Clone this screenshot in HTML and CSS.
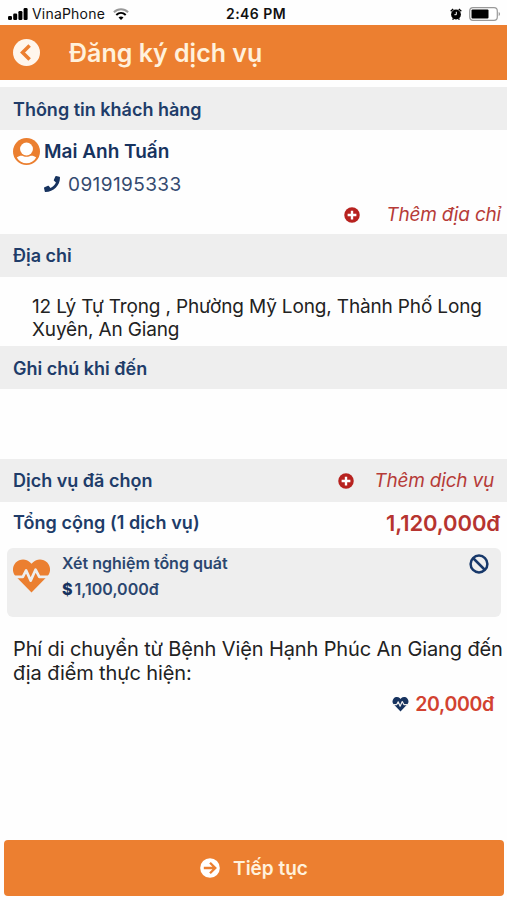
FILE: index.html
```html
<!DOCTYPE html>
<html lang="vi">

<head>
    <meta charset="utf-8">
    <meta name="viewport" content="width=device-width,initial-scale=1.0">
    <title>Đăng ký dịch vụ</title>
    <link rel="stylesheet" href="styles.css">
</head>

<body>
<svg class="symbols" aria-hidden="true">
    <symbol id="plus" viewBox="0 0 512 512">
        <circle cx="256" cy="256" r="248" fill="currentColor"/>
        <path d="M256 116v280M116 256h280" stroke="#fff" stroke-width="76"/>
    </symbol>
    <symbol id="heart" viewBox="0 0 512 512">
        <path d="M256 492 36 267C-14 215-12 130 38 77c55-57 145-59 200-2l18 19 18-19c55-57 145-55 200 2 50 53 52 138 2 190z" fill="currentColor"/>
        <path class="heart-pulse" d="M0 274h136l46-88 62 140 68-150 52 98h148" fill="none" stroke-linejoin="round"/>
    </symbol>
</svg>
<div class="app">
    <div class="status-bar">
        <div class="status-left">
            <svg class="icon-signal" viewBox="0 0 20 12">
                <rect x="0" y="8" width="4" height="4" rx="1.2"/>
                <rect x="5.2" y="5.5" width="4" height="6.5" rx="1.2"/>
                <rect x="10.4" y="3" width="4" height="9" rx="1.2"/>
                <rect x="15.6" y="0" width="4" height="12" rx="1.2"/>
            </svg>
            <span class="carrier">VinaPhone</span>
            <svg class="icon-wifi" viewBox="0 0 16 12" fill="none" stroke="#000" stroke-width="2">
                <path d="M.9 4.2C5 .2 11 .2 15.1 4.2" stroke="#999"/>
                <path d="M3.3 6.9c2.8-2.6 6.6-2.6 9.4 0"/>
                <path d="M8 12 5.5 9.4c1.500-1.300 3.500-1.300 5 0z" fill="#000" stroke="none"/>
            </svg>
        </div>
        <span class="clock">2:46 PM</span>
        <div class="status-right">
            <svg class="icon-alarm" viewBox="0 0 12 12">
                <path d="M.7 3.2 3.2.9M11.3 3.2 8.8.9M2.6 11.7l1-1.4M9.4 11.7l-1-1.4" stroke="#000" stroke-width="1.4"/>
                <circle cx="6" cy="6.5" r="4.9"/>
                <path d="M6.3 3.8v2.9H4.4" fill="none" stroke="#fff"/>
            </svg>
            <svg class="icon-battery" viewBox="0 0 32 14">
                <rect x=".7" y=".7" width="27.6" height="12.6" rx="3.3" fill="#fff" stroke="#999" stroke-width="1.2"/>
                <rect x="2.5" y="2.5" width="17" height="9" rx="1"/>
                <path d="M29.7 5c1.8.6 1.8 3.4 0 4z" fill="#999"/>
            </svg>
        </div>
    </div>

    <header class="header">
        <svg class="icon-back" viewBox="0 0 26 26">
            <circle cx="13" cy="13" r="13" fill="#fff6ec"/>
            <path d="m16 6.300-6.800 6.700 6.800 6.700" fill="none" stroke="#ec7f30" stroke-width="3.4"/>
        </svg>
        <h1 class="header-title">Đăng ký dịch vụ</h1>
    </header>

    <h2 class="section-title section-title-low">Thông tin khách hàng</h2>
    <div class="customer">
        <div class="customer-name">
            <svg class="icon-user" viewBox="0 0 26 26">
                <circle cx="13" cy="13" r="13" fill="#eb7f30"/>
                <circle cx="13" cy="10.6" r="6.2" fill="#fff"/>
                <path d="M3.7 18.7c2.2-1.7 4.5-1.9 6.3-1.2 2 .8 4 .8 6 0 1.8-.7 4.1-.5 6.3 1.2-3.8 7.4-14.8 7.4-18.6 0z" fill="#fff"/>
            </svg>
            <span>Mai Anh Tuấn</span>
        </div>
        <div class="customer-phone">
            <svg class="icon-phone" viewBox="0 0 512 512">
                <path d="M493 25 389 1c-11-3-23 3-27 14l-48 112c-4 10-1 21 7 28l61 50c-36 77-99 140-177 177l-50-61c-7-8-18-11-28-7L15 362C4 366-2 378 1 389l24 104c2 11 12 19 24 19 256 0 463-207 463-463 0-11-8-21-19-24z" fill="currentColor"/>
            </svg>
            <span>0919195333</span>
        </div>
        <div class="add-address">
            <svg class="icon-plus"><use href="#plus"/></svg>
            <span>Thêm địa chỉ</span>
        </div>
    </div>

    <h2 class="section-title">Địa chỉ</h2>
    <p class="address">12 Lý Tự Trọng , Phường Mỹ Long, Thành Phố Long<br>Xuyên, An Giang</p>

    <h2 class="section-title section-title-low">Ghi chú khi đến</h2>
    <div class="note"></div>

    <div class="section-title">
        <span>Dịch vụ đã chọn</span>
        <div class="add-service">
            <svg class="icon-plus"><use href="#plus"/></svg>
            <span>Thêm dịch vụ</span>
        </div>
    </div>
    <div class="total">
        <span>Tổng cộng (1 dịch vụ)</span>
        <span class="total-price">1,120,000đ</span>
    </div>

    <div class="service-card">
        <svg class="icon-heart"><use href="#heart"/></svg>
        <div class="service-info">
            <span class="service-name">Xét nghiệm tổng quát</span>
            <div class="service-price">
                <span class="dollar">$</span>
                <span>1,100,000đ</span>
            </div>
        </div>
        <svg class="icon-ban" viewBox="0 0 20 20" fill="none" stroke="#17386a" stroke-width="2.5">
            <circle cx="10" cy="10" r="8.4"/>
            <path d="m4 4 12 12"/>
        </svg>
    </div>

    <p class="fee-text">Phí di chuyển từ Bệnh Viện Hạnh Phúc An Giang đến<br>địa điểm thực hiện:</p>
    <div class="fee">
        <svg class="icon-heart-small"><use href="#heart"/></svg>
        <span>20,000đ</span>
    </div>

    <button class="btn-continue" type="button">
        <svg class="icon-next" viewBox="0 0 20 20">
            <circle cx="10" cy="10" r="9.8" fill="#fff"/>
            <path d="M3.8 10h11M10 4.7l5.3 5.3-5.3 5.3" fill="none" stroke="#ec7f30" stroke-width="2.3"/>
        </svg>
        <span>Tiếp tục</span>
    </button>
</div>
</body>
</html>
```

FILE: styles.css
```css
* {
    margin: 0;
    padding: 0;
    box-sizing: border-box;
}

body {
    background-color: #fefefe;
    color: #222;
    font-family: Inter, Roboto, "Liberation Sans", sans-serif;
    white-space: nowrap;
}

svg {
    display: block;
    flex: none;
}

.symbols {
    position: absolute;
    width: 0;
    height: 0;
}

.app {
    display: flex;
    flex-direction: column;
    width: 507px;
    height: 900px;
    overflow: hidden;
}

/* status bar */
.status-bar {
    display: grid;
    grid-template-columns: 1fr auto 1fr;
    align-items: center;
    height: 25px;
    padding: 2px 6px 0 8px;
    color: #111;
    font-size: 14px;
}

.status-left {
    display: flex;
    align-items: center;
}

.icon-signal {
    width: 20px;
    height: 12px;
    margin-right: 4px;
}

.carrier {
    letter-spacing: 0.2px;
}

.icon-wifi {
    width: 16px;
    height: 12px;
    margin-left: 8px;
}

.clock {
    padding-left: 3px;
    font-size: 14px;
    font-weight: 600;
    letter-spacing: 0.45px;
}

.status-right {
    display: flex;
    align-items: center;
    justify-content: flex-end;
    gap: 7px;
}

.icon-alarm {
    width: 12px;
    height: 12px;
}

.icon-battery {
    width: 32px;
    height: 14px;
}

/* header */
.header {
    display: flex;
    align-items: center;
    height: 55px;
    margin-bottom: 7px;
    padding: 0 13px;
    background-color: #ec7f30;
}

.icon-back {
    width: 27px;
    height: 27px;
    margin-right: 29px;
}

.header-title {
    color: #fff1dc;
    font-size: 25px;
    font-weight: 600;
}

/* sections */
.section-title {
    display: flex;
    align-items: center;
    justify-content: space-between;
    height: 43px;
    padding: 0 13px;
    background-color: #eee;
    color: #203c69;
    font-size: 18px;
    font-weight: 600;
}

.section-title-low {
    padding-top: 1px;
}

.customer {
    height: 104px;
    padding-top: 6px;
    color: #17335f;
}

.customer-name {
    display: flex;
    align-items: center;
    height: 31px;
    padding-left: 13px;
    font-size: 19px;
    font-weight: 600;
}

.icon-user {
    width: 27px;
    height: 27px;
    margin-right: 4px;
}

.customer-phone {
    display: flex;
    align-items: center;
    height: 34px;
    padding-left: 44px;
    color: #344a70;
    font-size: 19px;
    letter-spacing: 0.4px;
}

.icon-phone {
    width: 16px;
    height: 16px;
    margin-right: 8px;
    color: #17335f;
}

.add-address,
.add-service {
    display: flex;
    align-items: center;
    color: #b63b38;
    font-size: 19px;
    font-style: italic;
    font-weight: 400;
    letter-spacing: -0.2px;
}

.add-address {
    justify-content: flex-end;
    height: 27px;
    padding-right: 6px;
}

.icon-plus {
    width: 16px;
    height: 16px;
    color: #b7221f;
}

.add-address .icon-plus {
    margin-right: 26px;
}

.add-service .icon-plus {
    margin-right: 20px;
}

.address {
    height: 69px;
    padding: 18px 0 0 32px;
    font-size: 19px;
    letter-spacing: -0.15px;
    line-height: 23px;
}

.note {
    height: 70px;
}

/* chosen services */
.total {
    display: flex;
    align-items: center;
    justify-content: space-between;
    height: 41px;
    padding: 0 7px 0 13px;
    color: #203c69;
    font-size: 18px;
    font-weight: 600;
    letter-spacing: 0.05px;
}

.total-price {
    color: #b63430;
    font-size: 22px;
    letter-spacing: -0.1px;
}

.service-card {
    display: flex;
    height: 69px;
    margin: 5px 6px 0 7px;
    padding: 4px 12px 0 6px;
    border-radius: 6px;
    background-color: #eee;
    color: #2b466f;
    font-weight: 600;
}

.icon-heart {
    width: 37px;
    height: 37px;
    margin: 5px 12px 0 0;
    color: #eb7f30;
}

.heart-pulse {
    stroke: #eee;
    stroke-width: 38px;
}

.service-info {
    flex: 1;
    font-size: 16px;
}

.service-name {
    display: block;
    line-height: 22px;
}

.service-price {
    display: flex;
    gap: 2px;
    line-height: 30px;
}

.dollar {
    color: #17335f;
    font-weight: 800;
}

.icon-ban {
    width: 20px;
    height: 20px;
    margin-top: 2px;
}

.fee-text {
    padding: 20px 0 0 13px;
    font-size: 20px;
    letter-spacing: -0.12px;
    line-height: 24px;
}

.fee {
    display: flex;
    align-items: center;
    justify-content: flex-end;
    gap: 6px;
    height: 38px;
    padding-right: 13px;
    color: #d24230;
    font-size: 19.5px;
    font-weight: 600;
    letter-spacing: -0.3px;
}

.icon-heart-small {
    width: 17px;
    height: 16px;
    color: #17335f;
}

.btn-continue {
    display: flex;
    align-items: center;
    justify-content: center;
    gap: 13px;
    height: 56px;
    margin: auto 3px 4px 4px;
    border: 0;
    border-radius: 4px;
    background-color: #ec7f30;
    color: #fff1dc;
    font: 600 19px Inter, Roboto, sans-serif;
}

.icon-next {
    width: 20px;
    height: 20px;
}
```
